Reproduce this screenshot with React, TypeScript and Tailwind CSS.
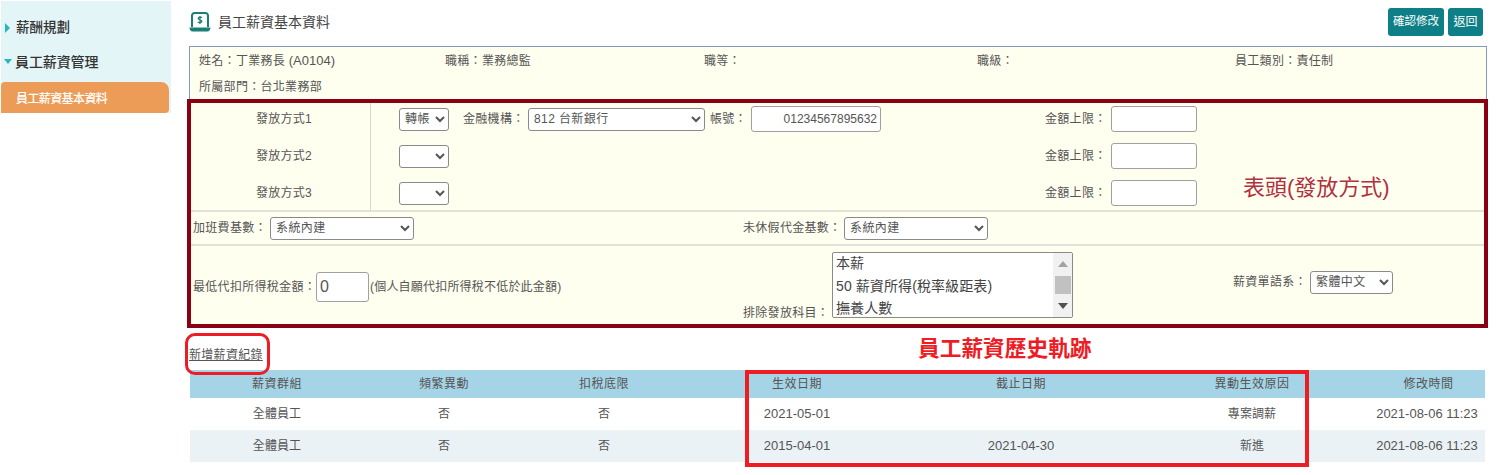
const inputCls = "border border-[#a0a0a0] rounded-[3px] bg-white";
const selectCls = "h-[23px] border border-[#8a8a8a] rounded-[3px] bg-white pl-px text-[12px] tracking-[0.4px] text-[#555]";

function Caret({ open }: { open?: boolean }) {
  return (
    <svg width="8" height="10" viewBox="0 0 8 10" className="shrink-0">
      {open ? <path d="M0 2h8L4 7z" fill="#2bb3c0" /> : <path d="M1 0l5 5-5 5z" fill="#2bb3c0" />}
    </svg>
  );
}

function SalaryIcon() {
  return (
    <svg width="22" height="20" viewBox="0 0 22 20" className="shrink-0">
      <path d="M3 15V3.500A2.500 2.500 0 0 1 5.500 1h11A2.500 2.500 0 0 1 19 3.500V15" fill="none" stroke="#1a7f75" strokeWidth="2" />
      <path d="M0.500 15.500h21c0 2.200-1.200 4-3.200 4H3.700c-2 0-3.200-1.800-3.200-4z" fill="#1a7f75" />
      <path d="M13 5.600c-.6-.7-3.600-1-3.800.8-.2 1.900 3.800 1 3.600 3-.2 1.700-3.200 1.400-4 .5M11 4v8" fill="none" stroke="#1a7f75" strokeWidth="1.300" />
    </svg>
  );
}

function Sidebar() {
  return (
    <aside className="w-[171px] shrink-0 pt-px">
      <div className="bg-[#e4f5f7] ml-px h-[112px] pt-[17px]">
        <div className="flex items-center gap-[3px] pl-[3px] h-[20px] text-[13.500px] font-medium tracking-normal text-[#333]">
          <Caret />
          <span className="ml-px">薪酬規劃</span>
        </div>
        <div className="flex items-center gap-[1px] pl-[3px] h-[20px] mt-[14px] text-[14px] font-medium tracking-[-0.1px] text-[#333]">
          <Caret open />
          <span className="ml-[2px]">員工薪資管理</span>
        </div>
        <div className="mt-[10px] mr-[2px] h-[31px] pt-[2px] rounded-tr-lg rounded-br-sm rounded-tl-sm bg-[#ec9c57] pl-[15px] flex items-center text-[12px] font-medium tracking-[-0.6px] text-white">
          員工薪資基本資料
        </div>
      </div>
    </aside>
  );
}

function PayRow({ first, bank }: { first?: boolean; bank?: boolean }) {
  return (
    <div className="flex items-center h-[26px]">
      <div className="w-[646px] flex items-center">
        <select defaultValue="" className={`${selectCls} w-[50px]`}>
          <option value="">{first ? "轉帳" : ""}</option>
        </select>
        {bank && (
          <>
            <span className="ml-[14px] w-[65px]">金融機構：</span>
            <select defaultValue="" className={`${selectCls} w-[177px]`}>
              <option value="">812 台新銀行</option>
            </select>
            <span className="ml-[5px] w-[41px]">帳號：</span>
            <input
              readOnly
              defaultValue="01234567895632"
              className={`${inputCls} w-[130px] h-[26px] text-right pr-[3px] text-[12px] tracking-normal`}
            />
          </>
        )}
      </div>
      <span className="w-[66px]">金額上限：</span>
      <input readOnly className={`${inputCls} w-[86px] h-[26px]`} />
    </div>
  );
}

const rows = [
  ["全體員工", "否", "否", "2021-05-01", "", "專案調薪", "2021-08-06 11:23"],
  ["全體員工", "否", "否", "2015-04-01", "2021-04-30", "新進", "2021-08-06 11:23"],
];
const heads = ["薪資群組", "頻繁異動", "扣稅底限", "生效日期", "截止日期", "異動生效原因", "修改時間"];
const gridCols = "grid grid-cols-[174px_160px_160px_226px_222px_240px_113px]";

export default function App() {
  return (
    <div className="relative flex w-[1500px] h-[475px] overflow-hidden bg-white text-[12px] tracking-[0.3px] text-[#555] font-['Liberation_Sans','Noto_Sans_CJK_TC',sans-serif]">
      <Sidebar />

      <main className="flex-1 pl-[16px]">
        <div className="w-[1296px] h-[46px] pt-[8px] flex items-start justify-between">
          <div className="flex items-center gap-[7px] pl-[2px] h-[28px] text-[14px] tracking-normal text-[#444]">
            <SalaryIcon />
            員工薪資基本資料
          </div>
          <div className="flex gap-[4px]">
            <button className="w-[56px] h-[28px] rounded-[3px] bg-[#0f7f87] text-[11.500px] tracking-normal text-white">確認修改</button>
            <button className="w-[35px] h-[28px] rounded-[3px] bg-[#0f7f87] text-[12px] tracking-normal text-white">返回</button>
          </div>
        </div>

        <div className="ml-[2px] w-[1298px] h-[54px] border border-[#7f9db9] bg-[#fffff0] pl-[9px]">
          <div className="grid grid-cols-[246px_259px_273px_258px_1fr] h-[28px] items-center">
            <span>
              姓名：丁業務長 <span className="text-[13px] tracking-normal">(A0104)</span>
            </span>
            <span>職稱：業務總監</span>
            <span>職等：</span>
            <span>職級：</span>
            <span>員工類別：責任制</span>
          </div>
          <div className="h-[24px] flex items-center">所屬部門：台北業務部</div>
        </div>

        <div className="relative -mt-px w-[1301px] h-[229px] border-[4px] border-[#8a0012] bg-[#fffff0]">
          <div className="flex h-[109px] border-b-2 border-[#e2e2da]">
            <div className="w-[180px] pt-[3px] flex flex-col gap-[11px] border-r border-[#d8d8d0]">
              <div className="h-[26px] flex items-center justify-center pl-[7px]">發放方式1</div>
              <div className="h-[26px] flex items-center justify-center pl-[7px]">發放方式2</div>
              <div className="h-[26px] flex items-center justify-center pl-[7px]">發放方式3</div>
            </div>
            <div className="pl-[28px] pt-[3px] flex flex-col gap-[11px]">
              <PayRow first bank />
              <PayRow />
              <PayRow />
            </div>
          </div>

          <div className="flex items-center h-[34px] border-b-2 border-[#e2e2da] pl-[2px]">
            <span className="w-[77px]">加班費基數：</span>
            <select defaultValue="" className={`${selectCls} w-[144px]`}>
              <option value="">系統內建</option>
            </select>
            <span className="ml-[329px] w-[101px]">未休假代金基數：</span>
            <select defaultValue="" className={`${selectCls} w-[144px]`}>
              <option value="">系統內建</option>
            </select>
          </div>

          <div className="flex h-[77px] pl-[2px]">
            <div className="flex items-center w-[550px] pt-[5px]">
              <span className="w-[123px]">最低代扣所得稅金額：</span>
              <input readOnly defaultValue="0" className={`${inputCls} w-[53px] h-[30px] pl-[3px] text-[16px]`} />
              <span className="ml-px tracking-[0.200px]">(個人自願代扣所得稅不低於此金額)</span>
            </div>
            <div className="self-end pb-px w-[89px]">排除發放科目：</div>
            <div className="mt-[6px] w-[241px] h-[66px] flex border border-[#8a8a8a] rounded-[2px] bg-white text-[14px] tracking-[0.100px] text-[#444] leading-[22.500px]">
              <div className="flex-1 pl-[3px] -mt-px">
                <div>本薪</div>
                <div>50 薪資所得(稅率級距表)</div>
                <div>撫養人數</div>
              </div>
              <div className="w-[19px] bg-[#f1f1f1] flex flex-col items-center justify-between py-[8px]">
                <svg width="10" height="6" viewBox="0 0 10 6"><path d="M5 0l5 6H0z" fill="#a3a3a3" /></svg>
                <div className="w-[16px] h-[18px] bg-[#c1c1c1]" />
                <svg width="10" height="6" viewBox="0 0 10 6"><path d="M0 0h10L5 6z" fill="#505050" /></svg>
              </div>
            </div>
            <div className="flex items-center ml-[160px] pb-[5px]">
              <span className="w-[77px]">薪資單語系：</span>
              <select defaultValue="" className={`${selectCls} w-[83px]`}>
                <option value="">繁體中文</option>
              </select>
            </div>
          </div>
        </div>

        <div className="ml-[2px] h-[42px] flex items-end pb-[6px]">
          <a className="underline text-[#555] tracking-[0.300px]">新增薪資紀錄</a>
        </div>

        <div className="ml-[3px] w-[1295px]">
          <div className={`${gridCols} h-[28px] items-center text-center bg-[#a5d4e6]`}>
            {heads.map((h) => (
              <div key={h} className="tracking-[0.500px]">{h}</div>
            ))}
          </div>
          {rows.map((r, i) => (
            <div key={i} className={`${gridCols} h-[32px] items-center text-center text-[13px] tracking-normal ${i % 2 ? "bg-[#eaf2f5]" : "bg-white"}`}>
              {r.map((c, j) => (
                <div key={j} className={j === 6 ? "whitespace-nowrap pr-[3px]" : /^\d/.test(c) ? "" : "text-[12px] tracking-[0.100px]"}>{c}</div>
              ))}
            </div>
          ))}
        </div>
      </main>

      {/* annotations drawn over the page */}
      <span className="absolute left-[1243px] top-[174px] text-[22px] tracking-normal leading-[28px] text-[#b03040]">表頭(發放方式)</span>
      <span className="absolute left-[918px] top-[336px] text-[21.700px] tracking-normal leading-[26px] font-bold text-[#ee1c25]">員工薪資歷史軌跡</span>
      <div className="absolute left-[185px] top-[333px] w-[85px] h-[42px] border-[3px] border-[#ee1c25] rounded-[10px]" />
      <div className="absolute left-[745px] top-[370px] w-[564px] h-[97px] border-[4px] border-[#ee1c25]" />
    </div>
  );
}
